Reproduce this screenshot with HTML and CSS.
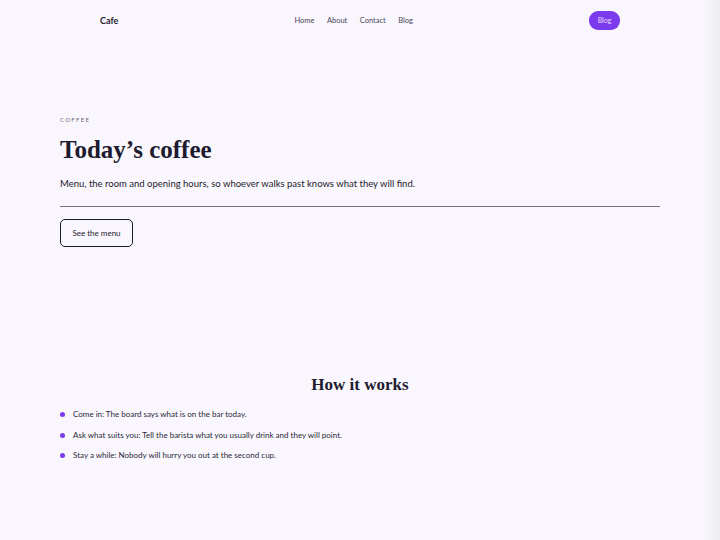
FILE: index.html
```html
<!DOCTYPE html>
<html lang="en">
<head>
<meta charset="utf-8">
<title>Cafe</title>
<link rel="stylesheet" href="styles.css">
</head>
<body>
<div class="page">
  <header class="header">
    <div class="logo">Cafe</div>
    <nav class="nav">
      <a href="#">Home</a>
      <a href="#">About</a>
      <a href="#">Contact</a>
      <a href="#">Blog</a>
    </nav>
    <a class="cta" href="#">Blog</a>
  </header>

  <section class="hero">
    <div class="eyebrow">COFFEE</div>
    <h1 class="title">Today’s coffee</h1>
    <p class="lead">Menu, the room and opening hours, so whoever walks past knows what they will find.</p>
    <hr class="rule">
    <a class="btn" href="#">See the menu</a>
  </section>

  <section class="how">
    <h2 class="how-title">How it works</h2>
    <ul class="steps">
      <li>Come in: The board says what is on the bar today.</li>
      <li>Ask what suits you: Tell the barista what you usually drink and they will point.</li>
      <li>Stay a while: Nobody will hurry you out at the second cup.</li>
    </ul>
  </section>
</div>
</body>
</html>
```
FILE: styles.css
```css
html, body {
  margin: 0;
  padding: 0;
}
body {
  background: linear-gradient(to right, #f9f7fd 0, #f9f7fd 702px, #ececf1 720px);
  font-family: "Source Sans Pro", Lato, "Liberation Sans", sans-serif;
  color: #1e1b2e;
  min-height: 540px;
}
.page {
  width: 720px;
}
.header {
  width: 520px;
  margin: 0 auto;
  height: 41px;
  display: flex;
  align-items: center;
  justify-content: space-between;
}
.logo {
  font-size: 9px;
  font-weight: 700;
  color: #1e1b2e;
}
.nav {
  display: flex;
  gap: 12.5px;
}
.nav a {
  font-size: 7.5px;
  color: #4a4658;
  text-decoration: none;
}
.cta {
  display: block;
  background: #7c3aed;
  color: #e9ddff;
  font-size: 7px;
  text-decoration: none;
  width: 31px;
  height: 19px;
  line-height: 19px;
  text-align: center;
  border-radius: 9px;
}
.hero {
  width: 600px;
  margin: 0 auto;
  padding-top: 75px;
}
.eyebrow {
  font-size: 6px;
  letter-spacing: 1.3px;
  color: #6b6778;
  line-height: 8px;
}
.title {
  font-family: "Liberation Serif", "DejaVu Serif", serif;
  font-weight: 700;
  font-size: 25px;
  line-height: 30px;
  margin: 11px 0 0;
  color: #1e1b2e;
}
.lead {
  font-size: 9.5px;
  line-height: 14px;
  margin: 12px 0 0;
  color: #1e1b2e;
}
.rule {
  border: 0;
  border-top: 1px solid #76737d;
  margin: 15px 0 0;
}
.btn {
  display: inline-flex;
  align-items: center;
  justify-content: center;
  margin-top: 12px;
  width: 71px;
  height: 26px;
  border: 1px solid #1e1b2e;
  border-radius: 5px;
  font-size: 8px;
  color: #1e1b2e;
  text-decoration: none;
}
.how {
  width: 600px;
  margin: 0 auto;
  padding-top: 127px;
}
.how-title {
  font-family: "Liberation Serif", "DejaVu Serif", serif;
  font-weight: 700;
  font-size: 17px;
  line-height: 22px;
  text-align: center;
  margin: 0;
  color: #1e1b2e;
}
.steps {
  list-style: none;
  margin: 13px 0 0;
  padding: 0;
  display: flex;
  flex-direction: column;
  gap: 9px;
}
.steps li {
  display: flex;
  align-items: center;
  gap: 8px;
  font-size: 8px;
  line-height: 11.5px;
  color: #2a2738;
}
.steps li::before {
  content: "";
  width: 5px;
  height: 5px;
  border-radius: 50%;
  background: #7c3aed;
}
```
